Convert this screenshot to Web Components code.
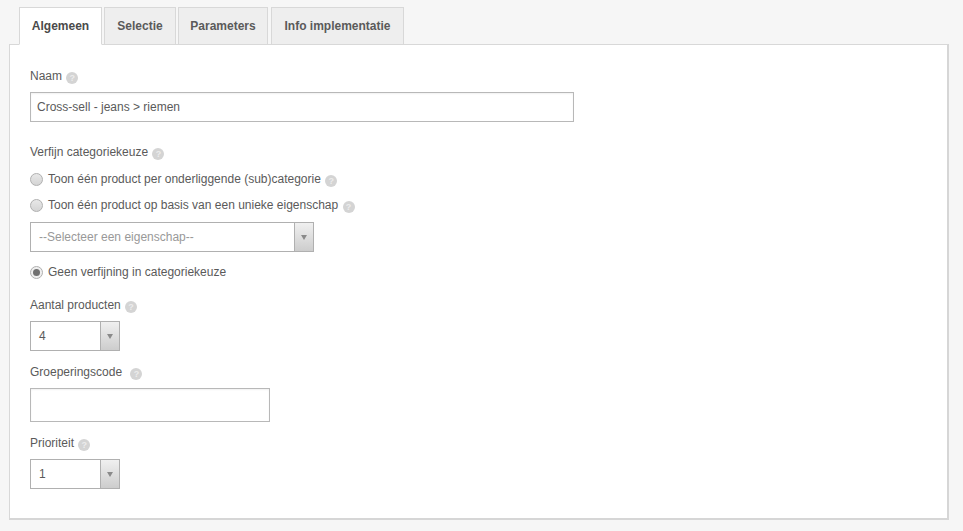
<!DOCTYPE html>
<html>
<head>
<meta charset="utf-8">
<style>
    html, body { margin: 0; padding: 0; }
    body {
        background: #f6f6f6;
        font: 12px "Liberation Sans", Arial, sans-serif;
        color: #5a5a5a;
    }
</style>
</head>
<body>
<tab-page>
    <tab-item slot="tabs" active style="width:83px">Algemeen</tab-item>
    <tab-item slot="tabs" style="width:72px">Selectie</tab-item>
    <tab-item slot="tabs" style="width:90px">Parameters</tab-item>
    <tab-item slot="tabs" style="width:133px;margin-left:1px">Info implementatie</tab-item>

    <form-label style="margin-bottom:8px">Naam <help-icon></help-icon></form-label>
    <text-input value="Cross-sell - jeans &gt; riemen" style="width:544px;height:30px;margin-bottom:22px"></text-input>

    <form-label style="margin-bottom:11px">Verfijn categoriekeuze <help-icon></help-icon></form-label>
    <radio-option style="margin-bottom:10px">Toon één product per onderliggende (sub)categorie <help-icon></help-icon></radio-option>
    <radio-option style="margin-bottom:9px">Toon één product op basis van een unieke eigenschap <help-icon></help-icon></radio-option>
    <select-box value="--Selecteer een eigenschap--" muted style="width:284px;margin-bottom:12px"></select-box>
    <radio-option checked style="margin-bottom:17px">Geen verfijning in categoriekeuze</radio-option>

    <form-label style="margin-bottom:8px">Aantal producten <help-icon></help-icon></form-label>
    <select-box value="4" style="width:90px;margin-bottom:13px"></select-box>

    <form-label style="margin-bottom:8px">Groeperingscode <help-icon style="margin-left:5px"></help-icon></form-label>
    <text-input style="width:240px;height:34px;margin-bottom:13px"></text-input>

    <form-label style="margin-bottom:8px">Prioriteit <help-icon></help-icon></form-label>
    <select-box value="1" style="width:90px"></select-box>
</tab-page>

<script>
class TabPage extends HTMLElement {
    constructor() {
        super();
        this.attachShadow({ mode: "open" });
    }

    connectedCallback() {
        this.shadowRoot.innerHTML = `
            <style>
                :host { display: block; padding: 7px 14px 11px 9px; }
                .tabs {
                    display: flex;
                    gap: 2px;
                    margin-left: 10px;
                    position: relative;
                    z-index: 1;
                }
                .panel {
                    display: flex;
                    flex-direction: column;
                    align-items: flex-start;
                    box-sizing: border-box;
                    height: 476px;
                    margin-top: -1px;
                    padding: 23px 20px 0;
                    background: #fff;
                    border: 1px solid #d8d8d8;
                    border-bottom: 2px solid #d6d6d6;
                    border-right: 2px solid #d6d6d6;
                }
            </style>
            <div class="tabs"><slot name="tabs"></slot></div>
            <div class="panel"><slot></slot></div>
        `;
    }
}

class TabItem extends HTMLElement {
    constructor() {
        super();
        this.attachShadow({ mode: "open" });
    }

    connectedCallback() {
        this.shadowRoot.innerHTML = `
            <style>
                :host {
                    display: flex;
                    align-items: center;
                    justify-content: center;
                    box-sizing: border-box;
                    height: 38px;
                    background: #eee;
                    border: 1px solid #d8d8d8;
                    font-weight: bold;
                    color: #5a5a5a;
                }
                :host([active]) {
                    background: #fff;
                    border-bottom-color: #fff;
                    color: #4a4a4a;
                }
            </style>
            <slot></slot>
        `;
    }
}

class FormLabel extends HTMLElement {
    constructor() {
        super();
        this.attachShadow({ mode: "open" });
    }

    connectedCallback() {
        this.shadowRoot.innerHTML = `
            <style>
                :host {
                    display: block;
                    height: 16px;
                    line-height: 16px;
                }
            </style>
            <slot></slot>
        `;
    }
}

class HelpIcon extends HTMLElement {
    constructor() {
        super();
        this.attachShadow({ mode: "open" });
    }

    connectedCallback() {
        this.shadowRoot.innerHTML = `
            <style>
                :host {
                    display: inline-block;
                    width: 12px;
                    height: 12px;
                    margin-left: 1px;
                    border-radius: 50%;
                    background: #d4d4d4;
                    color: #ececec;
                    font: bold 9px/12px "Liberation Sans", Arial, sans-serif;
                    text-align: center;
                    vertical-align: -1px;
                }
            </style>
            ?
        `;
    }
}

class TextInput extends HTMLElement {
    constructor() {
        super();
        this.attachShadow({ mode: "open" });
    }

    connectedCallback() {
        const value = this.getAttribute("value") || "";
        this.shadowRoot.innerHTML = `
            <style>
                :host {
                    display: block;
                    box-sizing: border-box;
                    padding: 0 6px;
                    border: 1px solid #b8b8b8;
                    background: #fff;
                    box-shadow: inset 0 1px 2px rgba(0, 0, 0, .06);
                }
                .value { display: flex; align-items: center; height: 100%; }
            </style>
            <div class="value">${value}</div>
        `;
    }
}

class SelectBox extends HTMLElement {
    constructor() {
        super();
        this.attachShadow({ mode: "open" });
    }

    connectedCallback() {
        const value = this.getAttribute("value") || "";
        this.shadowRoot.innerHTML = `
            <style>
                :host {
                    display: flex;
                    box-sizing: border-box;
                    height: 30px;
                    border: 1px solid #b0b0b0;
                    background: #fff;
                }
                .value {
                    flex: 1;
                    display: flex;
                    align-items: center;
                    padding-left: 8px;
                }
                :host([muted]) .value { color: #999; }
                .arrow {
                    display: flex;
                    align-items: center;
                    justify-content: center;
                    width: 18px;
                    border-left: 1px solid #b0b0b0;
                    background: linear-gradient(#f0f0f0, #cdcdcd);
                }
                .arrow svg { display: block; }
            </style>
            <div class="value">${value}</div>
            <div class="arrow"><svg width="6" height="5" viewBox="0 0 6 5"><path d="M0 0h6L3 5z" fill="#8a8a8a"/></svg></div>
        `;
    }
}

class RadioOption extends HTMLElement {
    constructor() {
        super();
        this.attachShadow({ mode: "open" });
    }

    connectedCallback() {
        this.shadowRoot.innerHTML = `
            <style>
                :host {
                    display: flex;
                    align-items: center;
                    height: 16px;
                    line-height: 16px;
                }
                .dot {
                    box-sizing: border-box;
                    width: 13px;
                    height: 13px;
                    margin-right: 5px;
                    border: 1px solid #b0b0b0;
                    border-radius: 50%;
                    background: linear-gradient(#e8e8e8, #d4d4d4);
                    display: flex;
                    align-items: center;
                    justify-content: center;
                }
                :host([checked]) .dot { background: #efefef; }
                :host([checked]) .dot::after {
                    content: "";
                    width: 7px;
                    height: 7px;
                    border-radius: 50%;
                    background: #707070;
                }
            </style>
            <span class="dot"></span><span class="text"><slot></slot></span>
        `;
    }
}

customElements.define("tab-page", TabPage);
customElements.define("tab-item", TabItem);
customElements.define("form-label", FormLabel);
customElements.define("help-icon", HelpIcon);
customElements.define("text-input", TextInput);
customElements.define("select-box", SelectBox);
customElements.define("radio-option", RadioOption);
</script>
</body>
</html>
